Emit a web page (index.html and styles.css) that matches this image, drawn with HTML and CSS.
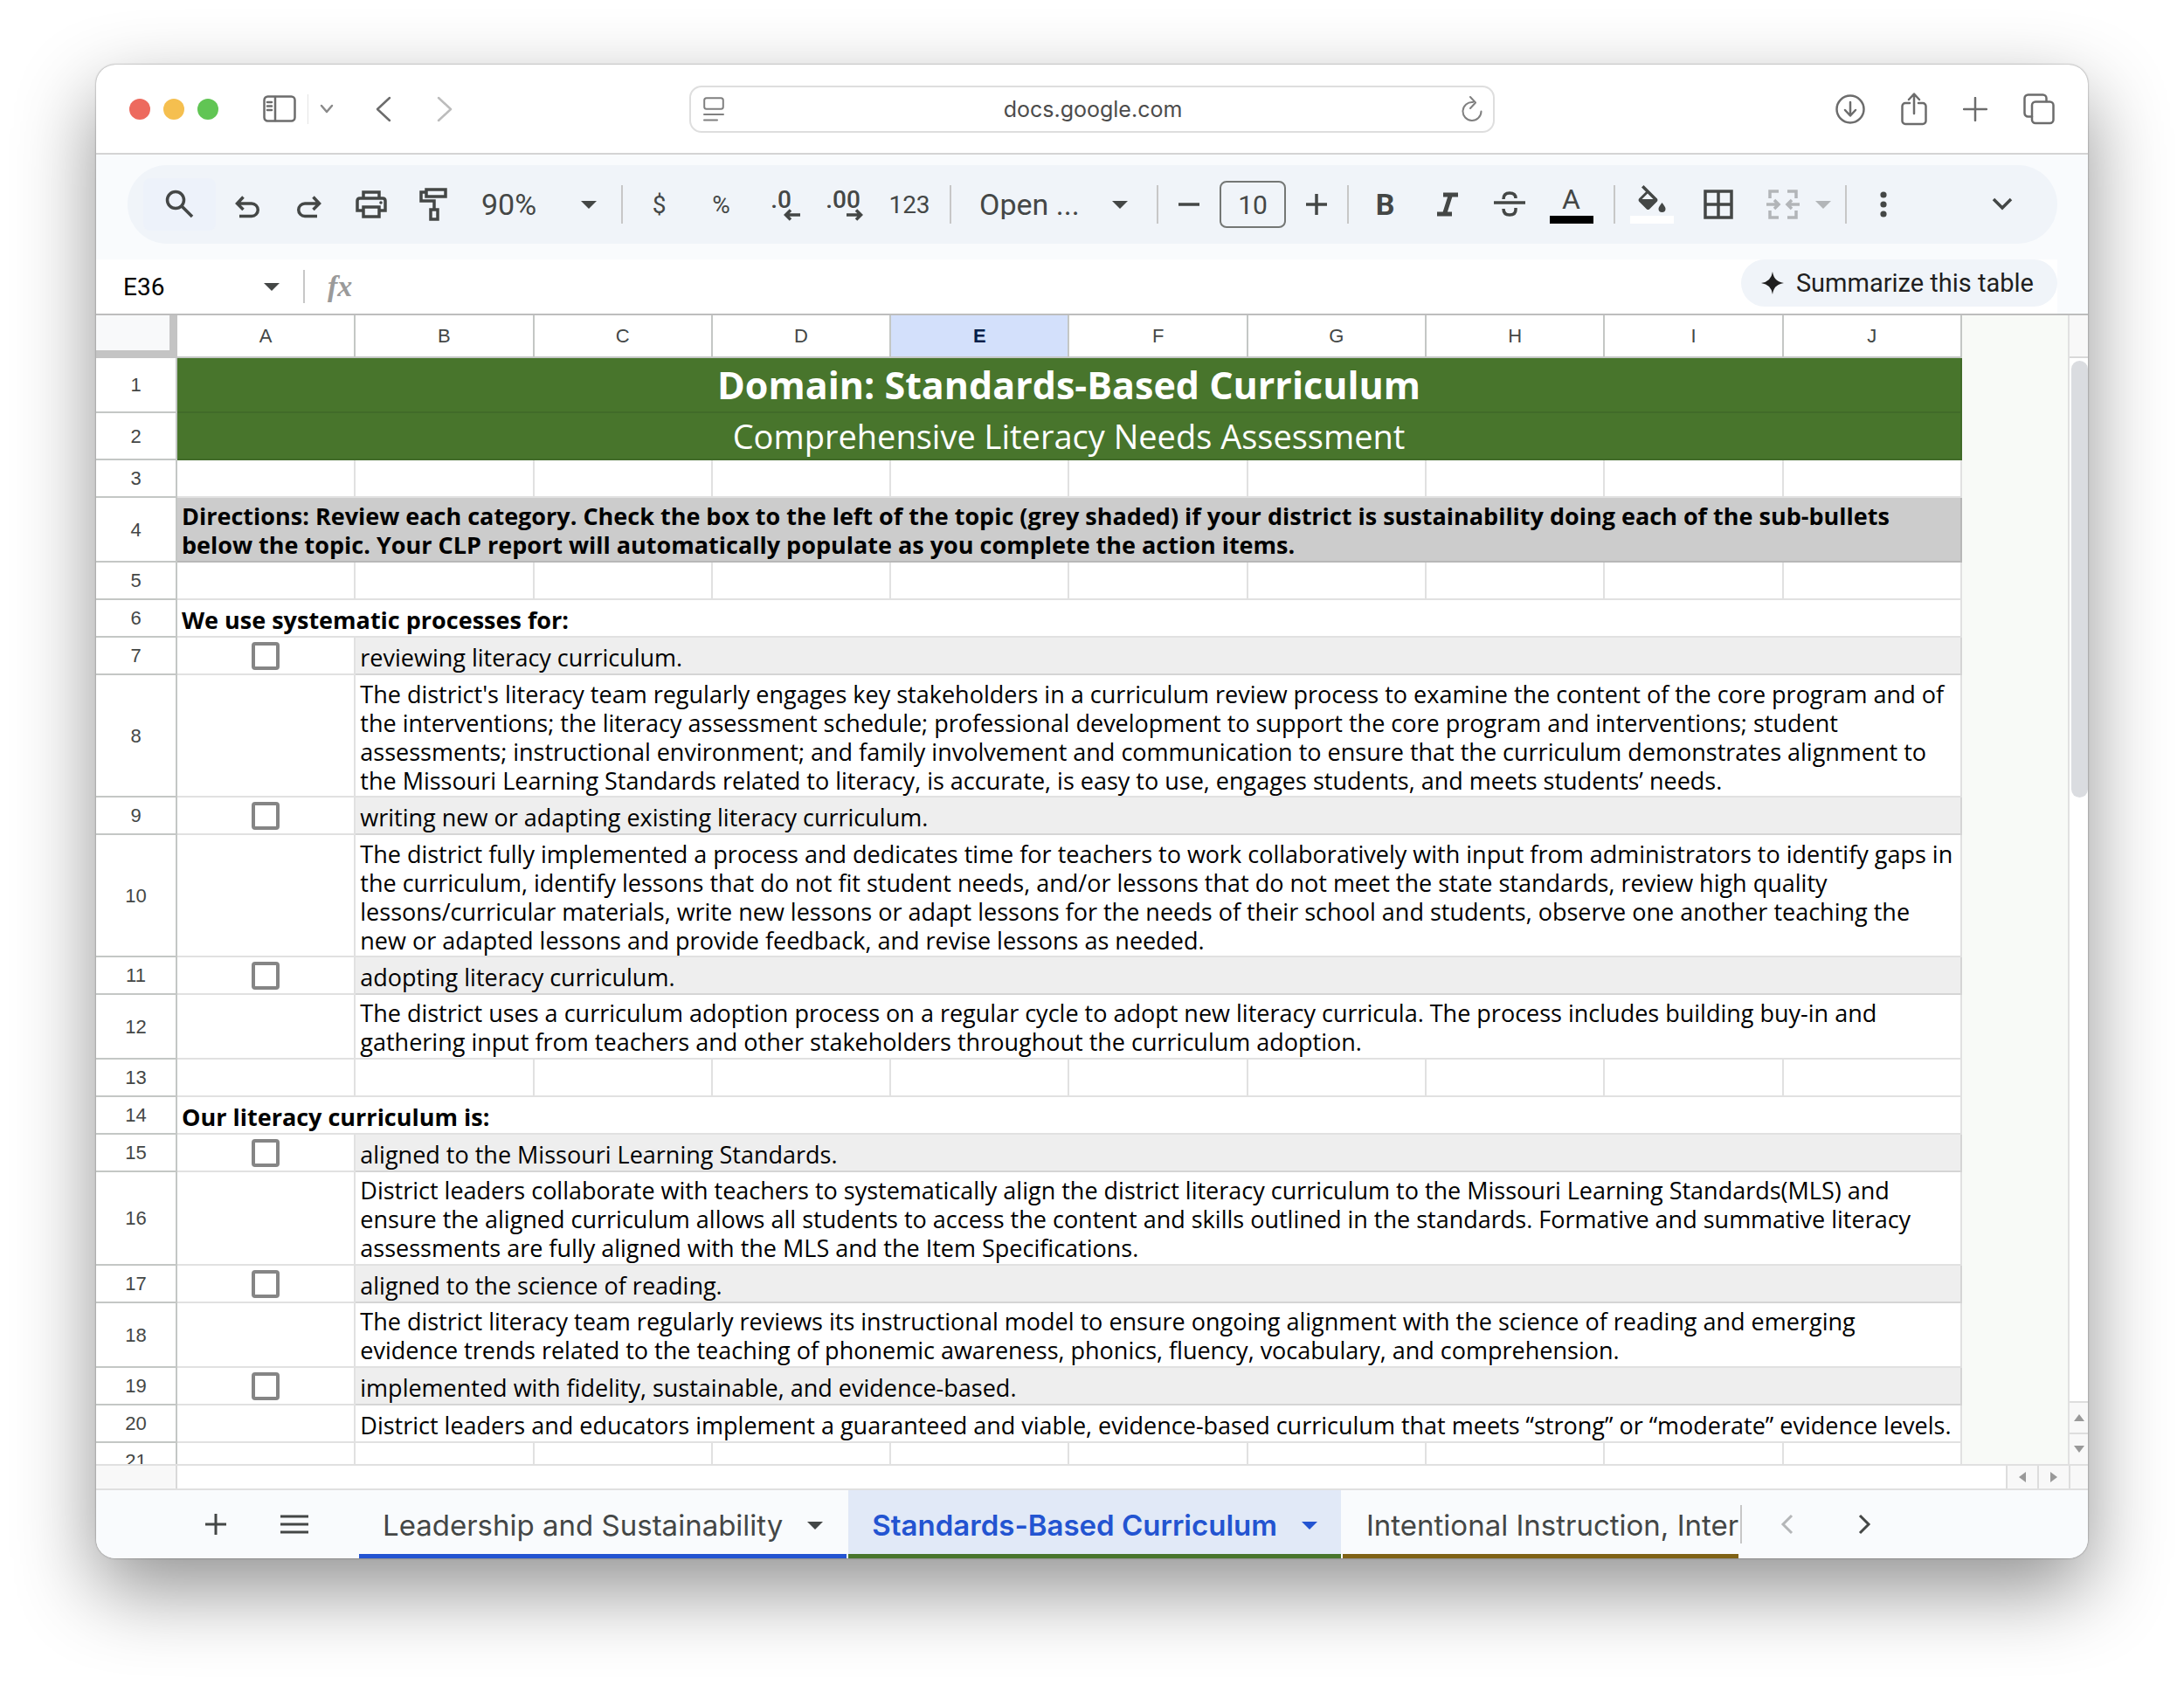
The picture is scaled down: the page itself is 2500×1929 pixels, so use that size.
FILE: index.html
```html
<!DOCTYPE html>
<html lang="en">
<head>
    <meta charset="UTF-8">
    <title>Standards-Based Curriculum</title>
    <link rel="stylesheet" href="styles.css">
</head>
<body>
<div class="window">
    <!-- browser bar -->
    <header class="browser">
        <div class="side left">
            <div class="lights"><i class="red"></i><i class="yellow"></i><i class="green"></i></div>
            <button class="btn sidebar" aria-label="Sidebar"><svg width="38" height="32" viewBox="0 0 38 32"><rect x="1.5" y="1.5" width="35" height="28" rx="4"/><path d="M14 2v27M5 8h5M5 12.500h5M5 17h5"/></svg></button>
            <span class="split"></span>
            <button class="btn menu" aria-label="Tab groups"><svg width="16" height="12" viewBox="0 0 16 12"><path d="M2 2l6 7 6-7"/></svg></button>
            <button class="btn back" aria-label="Back"><svg width="20" height="30" viewBox="0 0 20 30"><path d="M17 2L3 15l14 13"/></svg></button>
            <button class="btn forward" aria-label="Forward"><svg width="20" height="30" viewBox="0 0 20 30"><path d="M3 2l14 13L3 28"/></svg></button>
        </div>
        <div class="address">
            <svg width="24" height="28" viewBox="0 0 24 28"><rect x="1.200" y="1.200" width="21.600" height="12.600" rx="2.500"/><path d="M1 20h22M1 26.500h15"/></svg>
            <input type="text" value="docs.google.com" aria-label="Address">
            <svg width="24" height="30" viewBox="0 0 24 30"><path d="M13 7a10.500 10.500 0 1 0 9.500 10.500M10 1l6 6.500-6 6.500"/></svg>
        </div>
        <div class="side right">
            <button class="btn" aria-label="Downloads"><svg width="34" height="34" viewBox="0 0 34 34"><circle cx="17" cy="17" r="15.500"/><path d="M17 9v15M11 18l6 6.500 6-6.500"/></svg></button>
            <button class="btn" aria-label="Share"><svg class="share" width="30" height="38" viewBox="0 0 30 38"><path d="M10 12H5a3.500 3.500 0 0 0-3.500 3.500v17A3.500 3.500 0 0 0 5 36h20a3.500 3.500 0 0 0 3.500-3.500v-17A3.500 3.500 0 0 0 25 12h-5M15 24V2M9 8l6-6.500L21 8"/></svg></button>
            <button class="btn" aria-label="New tab"><svg width="28" height="28" viewBox="0 0 28 28"><path d="M14 1v26M1 14h26"/></svg></button>
            <button class="btn" aria-label="Tab overview"><svg width="36" height="36" viewBox="0 0 36 36"><rect x="10" y="9.500" width="24.500" height="24.500" rx="4"/><path d="M10 26.500H5.500a4 4 0 0 1-4-4v-17a4 4 0 0 1 4-4h17a4 4 0 0 1 4 4V9"/></svg></button>
        </div>
    </header>

    <!-- toolbar -->
    <div class="toolbar-wrap">
        <div class="toolbar">
            <button class="tool search" aria-label="Search the menus"><svg width="36" height="36" viewBox="0 0 36 36"><circle cx="13" cy="13" r="9.500"/><path d="M20 20l12 12"/></svg></button>
            <button class="tool" aria-label="Undo"><svg width="36" height="36" viewBox="0 0 36 36"><path d="M9 31.500h14a7 7 0 0 0 0-14.500H7M13.500 9.500L6.500 17l7 7"/></svg></button>
            <button class="tool" aria-label="Redo"><svg width="36" height="36" viewBox="0 0 36 36"><path d="M27 31.500H13a7 7 0 0 1 0-14.500H29M22.500 9.500l7 7.500-7 7"/></svg></button>
            <button class="tool" aria-label="Print"><svg width="36" height="36" viewBox="0 0 36 36"><path d="M9 11V4h18v7M9 25H2V14q0-3 3-3h26q3 0 3 3v11h-7M9 21h18v11H9z"/><circle class="fill" cx="29" cy="16" r="1.800"/></svg></button>
            <button class="tool" aria-label="Paint format"><svg width="36" height="42" viewBox="0 0 36 42"><path d="M10 4h22v8H10zM10 7H4v10h15v9M15 27h8v11h-8z"/></svg></button>
            <label class="pick zoom"><select aria-label="Zoom"><option>90%</option></select><b class="tri"></b></label>
            <span class="line"></span>
            <button class="tool txt first" aria-label="Currency">$</button>
            <button class="tool txt" aria-label="Percent">%</button>
            <button class="tool dec" aria-label="Decrease decimal places">.0<svg width="20" height="14" viewBox="0 0 20 14"><path d="M19 7H3M8 1.500L2.500 7 8 12.500"/></svg></button>
            <button class="tool dec" aria-label="Increase decimal places">.00<svg width="20" height="14" viewBox="0 0 20 14"><path d="M1 7h16M12 1.500L17.500 7 12 12.500"/></svg></button>
            <button class="tool num" aria-label="More formats">123</button>
            <span class="line"></span>
            <label class="pick font"><select aria-label="Font"><option>Open ...</option></select><b class="tri"></b></label>
            <span class="line"></span>
            <button class="tool minus" aria-label="Decrease font size"><svg width="26" height="26" viewBox="0 0 26 26"><path d="M1 13h24"/></svg></button>
            <input class="size" type="text" value="10" aria-label="Font size">
            <button class="tool plus" aria-label="Increase font size"><svg width="26" height="26" viewBox="0 0 26 26"><path d="M1 13h24M13 1v24"/></svg></button>
            <span class="line"></span>
            <button class="tool first bold" aria-label="Bold">B</button>
            <button class="tool" aria-label="Italic"><svg width="28" height="28" viewBox="0 0 28 28"><path class="thick" d="M9 3h17M2 25h17M17.500 3l-7 22"/></svg></button>
            <button class="tool" aria-label="Strikethrough"><svg width="38" height="30" viewBox="0 0 38 30"><path d="M1 13h36M12 9q0-7 7-7t7 6M12 20q0 7 7 7t7-6v-2"/></svg></button>
            <button class="tool swatch" aria-label="Text color">A<i class="black"></i></button>
            <span class="line wide"></span>
            <button class="tool first swatch" aria-label="Fill color"><svg width="36" height="34" viewBox="0 0 36 34"><path class="fill" d="M8.500 1L6 3.500l5 5L3 16.500q-1 1.500 0 3l9 9q1.500 1 3 0l9-9q1-1.500 0-3zM13 10.500l6.500 6.500H6.500z" fill-rule="evenodd"/><path class="fill" d="M29.500 21q-4 5-4 7a4 4 0 0 0 8 0q0-2-4-7z"/></svg><i class="white"></i></button>
            <button class="tool borders" aria-label="Borders"><svg width="34" height="34" viewBox="0 0 34 34"><path d="M2 2h30v30H2zM17 2v30M2 17h30"/></svg></button>
            <button class="tool merge" aria-label="Merge cells"><svg width="38" height="34" viewBox="0 0 38 34"><path d="M14 2H4v8M24 2h10v8M14 32H4v-8M24 32h10v-8M0 17h13M9 12l5 5-5 5M38 17H25M29 12l-5 5 5 5"/></svg><b class="tri"></b></button>
            <span class="line"></span>
            <button class="tool first" aria-label="More"><svg width="8" height="30" viewBox="0 0 8 30"><circle class="fill" cx="4" cy="4" r="3.600"/><circle class="fill" cx="4" cy="15" r="3.600"/><circle class="fill" cx="4" cy="26" r="3.600"/></svg></button>
            <button class="tool collapse" aria-label="Hide the menus"><svg width="24" height="16" viewBox="0 0 24 16"><path d="M2 2l10 10L22 2"/></svg></button>
        </div>
    </div>

    <!-- formula bar -->
    <div class="formula">
        <input class="name" type="text" value="E36" aria-label="Name box">
        <b class="tri"></b>
        <span class="line"></span>
        <label class="fx" for="fx">fx</label>
        <input id="fx" class="value" type="text">
        <div class="gutter"><button class="summarize"><svg width="26" height="26" viewBox="0 0 26 26"><path d="M13 0q1.500 11.500 13 13-11.500 1.500-13 13Q11.500 14.500 0 13 11.500 11.500 13 0z"/></svg>Summarize this table</button></div>
    </div>

    <!-- sheet -->
    <div class="sheet">
        <div class="grid">
            <table>
                <thead>
                    <tr><th class="corner"></th><th>A</th><th>B</th><th>C</th><th>D</th><th class="on">E</th><th>F</th><th>G</th><th>H</th><th>I</th><th>J</th></tr>
                </thead>
                <tbody>
                    <tr class="title"><th>1</th><td colspan="10">Domain: Standards-Based Curriculum</td></tr>
                    <tr class="subtitle"><th>2</th><td colspan="10">Comprehensive Literacy Needs Assessment</td></tr>
                    <tr><th>3</th><td></td><td></td><td></td><td></td><td></td><td></td><td></td><td></td><td></td><td></td></tr>
                    <tr class="directions h2"><th>4</th><td colspan="10">Directions: Review each category. Check the box to the left of the topic (grey shaded) if your district is sustainability doing each of the sub-bullets below the topic. Your CLP report will automatically populate as you complete the action items.</td></tr>
                    <tr><th>5</th><td></td><td></td><td></td><td></td><td></td><td></td><td></td><td></td><td></td><td></td></tr>
                    <tr class="group"><th>6</th><td colspan="10">We use systematic processes for:</td></tr>
                    <tr class="topic"><th>7</th><td class="check"><input type="checkbox" id="c7"></td><td colspan="9"><label for="c7">reviewing literacy curriculum.</label></td></tr>
                    <tr class="h4"><th>8</th><td></td><td colspan="9">The district's literacy team regularly engages key stakeholders in a curriculum review process to examine the content of the core program and of the interventions; the literacy assessment schedule; professional development to support the core program and interventions; student assessments; instructional environment; and family involvement and communication to ensure that the curriculum demonstrates alignment to the Missouri Learning Standards related to literacy, is accurate, is easy to use, engages students, and meets students’ needs.</td></tr>
                    <tr class="topic"><th>9</th><td class="check"><input type="checkbox" id="c9"></td><td colspan="9"><label for="c9">writing new or adapting existing literacy curriculum.</label></td></tr>
                    <tr class="h4"><th>10</th><td></td><td colspan="9">The district fully implemented a process and dedicates time for teachers to work collaboratively with input from administrators to identify gaps in the curriculum, identify lessons that do not fit student needs, and/or lessons that do not meet the state standards, review high quality lessons/curricular materials, write new lessons or adapt lessons for the needs of their school and students, observe one another teaching the new or adapted lessons and provide feedback, and revise lessons as needed.</td></tr>
                    <tr class="topic"><th>11</th><td class="check"><input type="checkbox" id="c11"></td><td colspan="9"><label for="c11">adopting literacy curriculum.</label></td></tr>
                    <tr class="h2"><th>12</th><td></td><td colspan="9">The district uses a curriculum adoption process on a regular cycle to adopt new literacy curricula. The process includes building buy-in and gathering input from teachers and other stakeholders throughout the curriculum adoption.</td></tr>
                    <tr><th>13</th><td></td><td></td><td></td><td></td><td></td><td></td><td></td><td></td><td></td><td></td></tr>
                    <tr class="group"><th>14</th><td colspan="10">Our literacy curriculum is:</td></tr>
                    <tr class="topic"><th>15</th><td class="check"><input type="checkbox" id="c15"></td><td colspan="9"><label for="c15">aligned to the Missouri Learning Standards.</label></td></tr>
                    <tr class="h3"><th>16</th><td></td><td colspan="9">District leaders collaborate with teachers to systematically align the district literacy curriculum to the Missouri Learning Standards(MLS) and ensure the aligned curriculum allows all students to access the content and skills outlined in the standards. Formative and summative literacy assessments are fully aligned with the MLS and the Item Specifications.</td></tr>
                    <tr class="topic"><th>17</th><td class="check"><input type="checkbox" id="c17"></td><td colspan="9"><label for="c17">aligned to the science of reading.</label></td></tr>
                    <tr class="h2"><th>18</th><td></td><td colspan="9">The district literacy team regularly reviews its instructional model to ensure ongoing alignment with the science of reading and emerging evidence trends related to the teaching of phonemic awareness, phonics, fluency, vocabulary, and comprehension.</td></tr>
                    <tr class="topic"><th>19</th><td class="check"><input type="checkbox" id="c19"></td><td colspan="9"><label for="c19">implemented with fidelity, sustainable, and evidence-based.</label></td></tr>
                    <tr><th>20</th><td></td><td colspan="9">District leaders and educators implement a guaranteed and viable, evidence-based curriculum that meets “strong” or “moderate” evidence levels.</td></tr>
                    <tr><th>21</th><td></td><td></td><td></td><td></td><td></td><td></td><td></td><td></td><td></td><td></td></tr>
                </tbody>
            </table>
        </div>
        <div class="vscroll">
            <span class="cap"></span>
            <span class="thumb"></span>
            <button aria-label="Scroll up"><b class="up"></b></button>
            <button aria-label="Scroll down"><b class="down"></b></button>
        </div>
    </div>
    <div class="hscroll">
        <span class="head"></span>
        <button aria-label="Scroll left"><b class="prev"></b></button>
        <button aria-label="Scroll right"><b class="next"></b></button>
        <span class="end"></span>
    </div>

    <!-- sheet tabs -->
    <footer class="tabs">
        <button class="add" aria-label="Add sheet"><svg width="24" height="24" viewBox="0 0 24 24"><path d="M0 12h24M12 0v24"/></svg></button>
        <button class="all" aria-label="All sheets"><svg width="32" height="22" viewBox="0 0 32 22"><path d="M0 2h32M0 11h32M0 20h32"/></svg></button>
        <nav>
            <a class="tab blue" href="#leadership">Leadership and Sustainability<b class="tri"></b></a>
            <a class="tab olive active" href="#curriculum">Standards-Based Curriculum<b class="tri"></b></a>
            <a class="tab brown" href="#instruction">Intentional Instruction, Interventions</a>
        </nav>
        <span class="line"></span>
        <button class="prev-tab" aria-label="Previous sheets"><svg width="16" height="24" viewBox="0 0 16 24"><path d="M13 2L3 12l10 10"/></svg></button>
        <button class="next-tab" aria-label="Next sheets"><svg width="16" height="24" viewBox="0 0 16 24"><path d="M3 2l10 10L3 22"/></svg></button>
    </footer>
</div>
</body>
</html>
```
FILE: styles.css
```css
* {box-sizing:border-box;}
body {margin:0;padding:74px 110px 144px;background:#fff;color:#000;font:27px/33px "Open Sans",sans-serif;}
button,input,select {margin:0;padding:0;border:none;background:none;color:inherit;font:inherit;}
button {display:flex;align-items:center;justify-content:center;}
svg {display:block;flex:none;fill:none;stroke:currentColor;stroke-width:3;}
svg .fill {fill:currentColor;stroke:none;}
svg .thick {stroke-width:5;}

.window {border-radius:22px;overflow:hidden;background:#fff;box-shadow:0 0 2px rgba(0,0,0,.5),0 36px 90px rgba(0,0,0,.43);}

/* browser bar */
.browser {display:flex;align-items:center;height:103px;padding:0 38px;border-bottom:2px solid #d4d4d4;color:#6c6c6c;}
.browser svg {stroke-width:2.500;stroke-linecap:round;stroke-linejoin:round;}
.side {display:flex;flex:1;align-items:center;}
.lights {display:flex;gap:15px;margin-right:51px;}
.lights i {width:24px;height:24px;border-radius:12px;}
.red {background:#ed6a5e;}
.yellow {background:#f5bf4f;}
.green {background:#61c554;}
.split {width:1px;height:34px;margin:0 13px;background:#e4e4e4;}
.menu {margin-right:47px;color:#8a8a8a;}
.back {margin-right:50px;}
.forward {color:#bcbcbc;}
.address {display:flex;align-items:center;width:922px;height:54px;padding:0 12px 0 14px;border:2px solid #dedede;border-radius:14px;}
.address svg {stroke-width:2;color:#808080;}
.address input {flex:1;min-width:0;text-align:center;color:#4c4c4c;font:25px/32px Inter,sans-serif;}
.right {justify-content:flex-end;gap:41px;}

/* toolbar */
.toolbar-wrap {height:120px;padding:12px 35px 18px 36px;background:#f9fbfd;}
.toolbar {display:flex;align-items:center;height:90px;padding:0 43px 0 18px;border-radius:45px;background:#f0f4f9;color:#444746;font-family:Roboto,sans-serif;}
.toolbar svg {stroke-width:3.500;}
.tool {width:71px;height:60px;}
.first {margin-left:6px;}
.search {width:83px;border-radius:8px;background:#edf2fa;}
.tri {width:0;height:0;border:9px solid transparent;border-top:9px solid currentColor;border-bottom:none;}
.line {width:2px;height:44px;background:#c7c7c7;}
.wide {margin-left:13px;}
.pick {display:flex;align-items:center;justify-content:space-between;font-size:34px;}
.pick select {appearance:none;}
.zoom {width:132px;margin:0 28px 0 20px;}
.txt,.num {font-size:28px;}
.num {width:76px;margin-right:8px;}
.dec {position:relative;padding:0 5px 12px 0;font-size:28px;font-weight:500;}
.dec svg {position:absolute;right:15px;bottom:11px;}
.font {width:170px;margin:0 33px 0 32px;}
.minus,.plus {width:70px;}
.size {width:76px;height:54px;border:2px solid #747775;border-radius:8px;text-align:center;font-size:30px;}
.bold {font-size:34px;font-weight:700;}
.swatch {position:relative;padding-bottom:12px;font-size:32px;}
.swatch i {position:absolute;left:11px;bottom:8px;width:50px;height:9px;}
.black {background:#000;}
.white {background:#fff;}
.borders {margin:0 4px 0 5px;}
.merge {gap:18px;width:106px;color:#b2b5b8;}
.collapse {margin-left:auto;width:40px;}

/* formula bar */
.formula {display:flex;align-items:center;height:64px;border-bottom:2px solid #bdbdbd;font-family:Roboto,sans-serif;}
.name {width:162px;padding-left:31px;font-size:28px;}
.formula .tri {margin:0 27px 0 30px;color:#444746;}
.formula .line {height:38px;}
.fx {margin-left:26px;color:#9a9a9a;font:italic 700 34px/36px "Liberation Serif",serif;}
.value {flex:1;min-width:0;}
.gutter {align-self:stretch;padding-right:35px;background:linear-gradient(to left,#f9fbfd 35px,#fff 35px);}
.summarize {gap:14px;height:54px;padding:0 27px 0 23px;border-radius:27px;background:#f0f4f9;color:#1f1f1f;font-size:29px;}
.summarize svg {fill:currentColor;stroke:none;}

/* sheet */
.sheet {display:flex;height:1317px;overflow:hidden;border-bottom:2px solid #e0e0e0;}
.grid {flex:1;padding-right:121px;background:#f8faf7;}
table {width:100%;border-collapse:separate;border-spacing:0;table-layout:fixed;background:#fff;}
tr {height:43px;}
th {padding:1px 0 0;border-right:2px solid #c4c7c5;border-bottom:2px solid #c4c7c5;color:#444746;font:22px/24px "Liberation Sans",sans-serif;}
thead tr {height:49px;}
.corner {width:93px;border-right:9px solid #c4c4c4;border-bottom:9px solid #c4c4c4;background:#f8f9fa;}
.on {background:#d3e0fb;color:#041e49;font-weight:700;}
td {padding:0 5px 2px;border-right:2px solid #e1e1e1;border-bottom:2px solid #e1e1e1;vertical-align:bottom;}
.title {height:63px;}
.subtitle {height:54px;}
.title td,.subtitle td {padding:0;border-color:#416b29;background:#48752c;color:#fff;text-align:center;vertical-align:middle;}
.title td {font-size:43px;font-weight:700;line-height:58px;}
.subtitle td {font-size:38px;line-height:50px;}
.h2 {height:74px;}
.h3 {height:107px;}
.h4 {height:140px;}
.h4 td {padding-bottom:1px;}
.directions td {border-color:#b7b7b7;background:#ccc;font-weight:700;}
.group td {font-weight:700;}
.topic td:last-child {background:#eee;border-color:#d5d5d5;}
.check {padding:0;}
.check input {display:block;width:32px;height:32px;margin:0 auto 4px;border:4px solid #858585;border-radius:4px;appearance:none;}

/* scrollbars */
.vscroll {display:flex;flex-direction:column;width:23px;border-left:2px solid #e1e1e1;}
.cap {height:49px;border-bottom:2px solid #d9d9d9;background:#f8f8f8;}
.thumb {width:19px;height:500px;margin:3px 0 auto 2px;border-radius:10px;background:#dadce0;}
.vscroll button {height:36px;border-top:2px solid #ddd;background:#f8f8f8;}
.up,.down {border:6px solid transparent;}
.up {border-bottom:8px solid #999;border-top:none;}
.down {border-top:8px solid #999;border-bottom:none;}
.hscroll {display:flex;justify-content:flex-end;height:26px;}
.head {width:93px;margin-right:auto;border-right:2px solid #d9d9d9;background:#f8f8f8;}
.hscroll button {width:36px;border-left:2px solid #ddd;background:#f8f8f8;}
.prev,.next {border:6px solid transparent;}
.prev {border-right:8px solid #999;border-left:none;}
.next {border-left:8px solid #999;border-right:none;}
.end {width:22px;border-left:2px solid #ddd;background:#f8f8f8;}

/* sheet tabs */
.tabs {display:flex;align-items:center;height:80px;border-top:2px solid #e0e0e0;background:#f9fbfd;color:#444746;}
.add {margin-left:125px;}
.all {margin:0 58px 0 62px;}
nav {display:flex;flex:1;align-self:stretch;min-width:0;overflow:hidden;}
.tab {display:flex;flex:none;align-items:center;gap:28px;margin-right:2px;padding:7px 27px 0;border-bottom:5px solid;color:#444746;font:33px/36px Inter,sans-serif;text-decoration:none;}
.blue {border-color:#2354d1;}
.olive {border-color:#48752c;}
.brown {border-color:#7f6216;}
.active {background:#e1e9f7;color:#2354d1;font-weight:600;}
.tabs .line {margin-left:2px;}
.prev-tab {margin:0 72px 0 44px;color:#b4b6b8;}
.next-tab {margin-right:248px;}
```
